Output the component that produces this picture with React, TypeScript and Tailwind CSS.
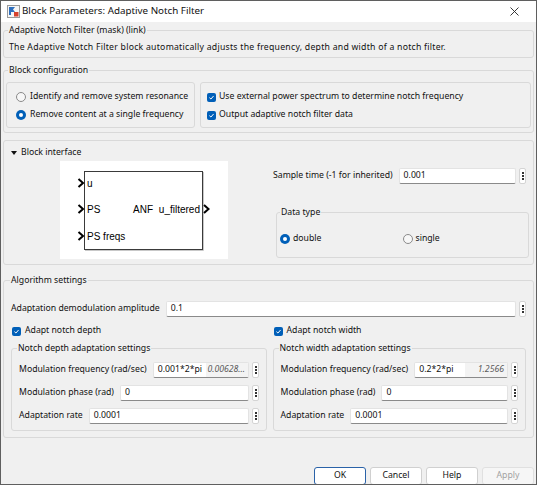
import React from 'react';

const Dots = () => (
  <div className="flex h-[16px] w-[7px] shrink-0 flex-col items-center justify-center gap-[1px] rounded-[2px] border border-[#d4d4d4] bg-white">
    <span className="h-[2px] w-[2px] bg-[#333]" />
    <span className="h-[2px] w-[2px] bg-[#333]" />
    <span className="h-[2px] w-[2px] bg-[#333]" />
  </div>
);

const Field = ({ value, evaluated }: { value: string; evaluated?: string }) => (
  <div className="flex h-[16px] min-w-0 flex-1 items-center overflow-hidden rounded-[2px] border border-[#e3e3e3] border-b-[#8a8a8a] bg-white">
    <span className="flex-1 truncate px-[4px]">{value}</span>
    {evaluated && (
      <span className="flex h-full w-[42px] items-center justify-end bg-[#f3f3f3] pr-[3px] italic text-[#5a5a5a]">
        {evaluated}
      </span>
    )}
  </div>
);

const ParamRow = ({ label, value, evaluated, className = '' }: { label: string; value: string; evaluated?: string; className?: string }) => (
  <div className={`flex h-[16px] items-center ${className}`}>
    <span className="mr-[6px] whitespace-nowrap">{label}</span>
    <Field value={value} evaluated={evaluated} />
    <span className="ml-[3px]">
      <Dots />
    </span>
  </div>
);

const Radio = ({ checked }: { checked?: boolean }) =>
  checked ? (
    <span className="flex h-[10px] w-[10px] shrink-0 items-center justify-center rounded-full bg-[#005fb8]">
      <span className="h-[4px] w-[4px] rounded-full bg-white" />
    </span>
  ) : (
    <span className="h-[10px] w-[10px] shrink-0 rounded-full border border-[#8a8a8a] bg-[#f7f7f7]" />
  );

const Check = () => (
  <span className="flex h-[9px] w-[9px] shrink-0 items-center justify-center rounded-[2px] bg-[#005fb8]">
    <svg viewBox="0 0 10 10" className="h-[7px] w-[7px]">
      <path d="M2 5.2 L4.2 7.2 L8 2.8" fill="none" stroke="white" strokeWidth="1.4" />
    </svg>
  </span>
);

const Group = ({
  title,
  className = '',
  legendClass = '',
  children,
}: {
  title: string;
  className?: string;
  legendClass?: string;
  children: React.ReactNode;
}) => (
  <fieldset className={`rounded-[3px] border border-[#d9d9d9] ${className}`}>
    <legend className={`px-[1px] leading-[16px] ${legendClass}`}>{title}</legend>
    {children}
  </fieldset>
);

const Diagram = () => (
  <svg width="168" height="98" className="shrink-0 bg-white" style={{ fontFamily: "'Liberation Sans', Arial, sans-serif" }}>
    <rect x="24.5" y="10.5" width="118" height="78" fill="white" stroke="#3a3a3a" />
    <path d="M25 89.5 H143.5 V11" fill="none" stroke="#c8c8c8" />
    {[22, 48, 75].map((y) => (
      <path key={y} d={`M18.5 ${y - 4} L23 ${y} L18.5 ${y + 4}`} fill="none" stroke="#000" strokeWidth="2" />
    ))}
    <path d="M144 44 L148.5 48 L144 52" fill="none" stroke="#000" strokeWidth="2" />
    <g fontSize="10" fill="#000">
      <text x="27" y="25.5">u</text>
      <text x="27" y="51.5">PS</text>
      <text x="27" y="78.5">PS freqs</text>
      <text x="83" y="51.5" textAnchor="middle">ANF</text>
      <text x="140" y="51.5" textAnchor="end">u_filtered</text>
    </g>
  </svg>
);

const TitleIcon = () => (
  <svg width="13" height="13" viewBox="0 0 13 13">
    <rect x="0.5" y="0.5" width="12" height="12" fill="#f6f6f6" stroke="#9a9a9a" />
    <path d="M2 2 H8 L6 4.5 L8 7 H4 V10 H2 Z" fill="#2e6fbe" />
    <rect x="7" y="7" width="4.5" height="4.5" fill="#d6412c" />
  </svg>
);

const Button = ({ label, primary, disabled }: { label: string; primary?: boolean; disabled?: boolean }) => (
  <div
    className={`flex h-[18px] w-[52px] items-center justify-center rounded-[3px] border ${
      primary ? 'border-[#2a62a8] bg-white' : disabled ? 'border-[#e0e0e0] bg-[#f6f6f6] text-[#a2a2a2]' : 'border-[#d0d0d0] bg-white'
    }`}
  >
    {label}
  </div>
);

export default function App() {
  return (
    <div className="flex h-[485px] w-[537px] flex-col overflow-hidden border border-[#5f5f5f] bg-[#f0f0f0] text-[8.7px] text-[#111] [font-family:'Noto_Sans',sans-serif]">
      {/* Title bar */}
      <div className="flex h-[21px] shrink-0 items-center bg-white pl-[6px] pr-[17px]">
        <TitleIcon />
        <span className="ml-[2px] flex-1 text-[9.8px]">Block Parameters: Adaptive Notch Filter</span>
        <svg width="9" height="9" viewBox="0 0 9 9">
          <path d="M0.5 0.5 L8.5 8.5 M8.5 0.5 L0.5 8.5" stroke="#222" strokeWidth="0.9" />
        </svg>
      </div>

      <div className="flex flex-col px-[2px]">
        {/* Mask description */}
        <Group title="Adaptive Notch Filter (mask) (link)" className="px-[4px] pb-[3px]">
          <div className="mt-[2px] pl-[1px] leading-[14px] tracking-[0.25px]">
            The Adaptive Notch Filter block automatically adjusts the frequency, depth and width of a notch filter.
          </div>
        </Group>

        {/* Block configuration */}
        <Group title="Block configuration" legendClass="ml-[2px]" className="mt-[4px] px-[2px] pb-[4px]">
          <div className="mt-[4px] flex gap-[5px]">
            <div className="flex h-[46px] w-[189px] flex-col gap-[2px] rounded-[3px] border border-[#d9d9d9] pl-[9px] pt-[6px]">
              <div className="flex h-[16px] items-center gap-[4px] whitespace-nowrap">
                <Radio />
                <span>Identify and remove system resonance</span>
              </div>
              <div className="flex h-[16px] items-center gap-[4px] whitespace-nowrap">
                <Radio checked />
                <span>Remove content at a single frequency</span>
              </div>
            </div>
            <div className="flex h-[46px] flex-1 flex-col gap-[2px] rounded-[3px] border border-[#d9d9d9] pl-[6px] pt-[6px]">
              <div className="flex h-[16px] items-center gap-[3px]">
                <Check />
                <span>Use external power spectrum to determine notch frequency</span>
              </div>
              <div className="flex h-[16px] items-center gap-[3px]">
                <Check />
                <span>Output adaptive notch filter data</span>
              </div>
            </div>
          </div>
        </Group>

        {/* Block interface */}
        <div className="mt-[7px] rounded-[3px] border border-[#d9d9d9] pb-[5px]">
          <div className="mt-[4px] flex h-[16px] items-center gap-[4px] pl-[7px]">
            <svg width="6" height="4" viewBox="0 0 6 4">
              <path d="M0 0 H6 L3 4 Z" fill="#111" />
            </svg>
            <span>Block interface</span>
          </div>
          <div className="flex">
            <div className="ml-[56px]">
              <Diagram />
            </div>
            <div className="ml-[45px] flex flex-1 flex-col pr-[4px]">
              <ParamRow label="Sample time (-1 for inherited)" value="0.001" className="mt-[7px] pr-[3px]" />
              <Group title="Data type" className="ml-[3px] mt-[20px] px-[3px] pb-[10px]">
                <div className="mt-[11px] grid h-[16px] grid-cols-2 items-center">
                  <div className="flex items-center gap-[3px]">
                    <Radio checked />
                    <span>double</span>
                  </div>
                  <div className="flex items-center gap-[3px]">
                    <Radio />
                    <span>single</span>
                  </div>
                </div>
              </Group>
            </div>
          </div>
        </div>

        {/* Algorithm settings */}
        <Group title="Algorithm settings" legendClass="-ml-[1px]" className="mt-[7px] px-[7px] pb-[6px]">
          <ParamRow label="Adaptation demodulation amplitude" value="0.1" className="mt-[13px]" />
          <div className="mt-[6px] grid grid-cols-2 gap-[8px]">
            <div className="flex flex-col">
              <div className="flex h-[16px] items-center gap-[4px] pl-[1px]">
                <Check />
                <span>Adapt notch depth</span>
              </div>
              <Group title="Notch depth adaptation settings" legendClass="-ml-[2px]" className="mt-[1px] px-[7px] pb-[6px]">
                <ParamRow label="Modulation frequency (rad/sec)" value="0.001*2*pi" evaluated="0.00628..." className="mt-[6px]" />
                <ParamRow label="Modulation phase (rad)" value="0" className="mt-[7px]" />
                <ParamRow label="Adaptation rate" value="0.0001" className="mt-[7px]" />
              </Group>
            </div>
            <div className="flex flex-col">
              <div className="flex h-[16px] items-center gap-[4px] pl-[1px]">
                <Check />
                <span>Adapt notch width</span>
              </div>
              <Group title="Notch width adaptation settings" legendClass="-ml-[2px]" className="mt-[1px] px-[7px] pb-[6px]">
                <ParamRow label="Modulation frequency (rad/sec)" value="0.2*2*pi" evaluated="1.2566" className="mt-[6px]" />
                <ParamRow label="Modulation phase (rad)" value="0" className="mt-[7px]" />
                <ParamRow label="Adaptation rate" value="0.0001" className="mt-[7px]" />
              </Group>
            </div>
          </div>
        </Group>

        {/* Buttons */}
        <div className="mt-[29px] flex justify-end gap-[4px]">
          <Button label="OK" primary />
          <Button label="Cancel" />
          <Button label="Help" />
          <Button label="Apply" disabled />
        </div>
      </div>
    </div>
  );
}
